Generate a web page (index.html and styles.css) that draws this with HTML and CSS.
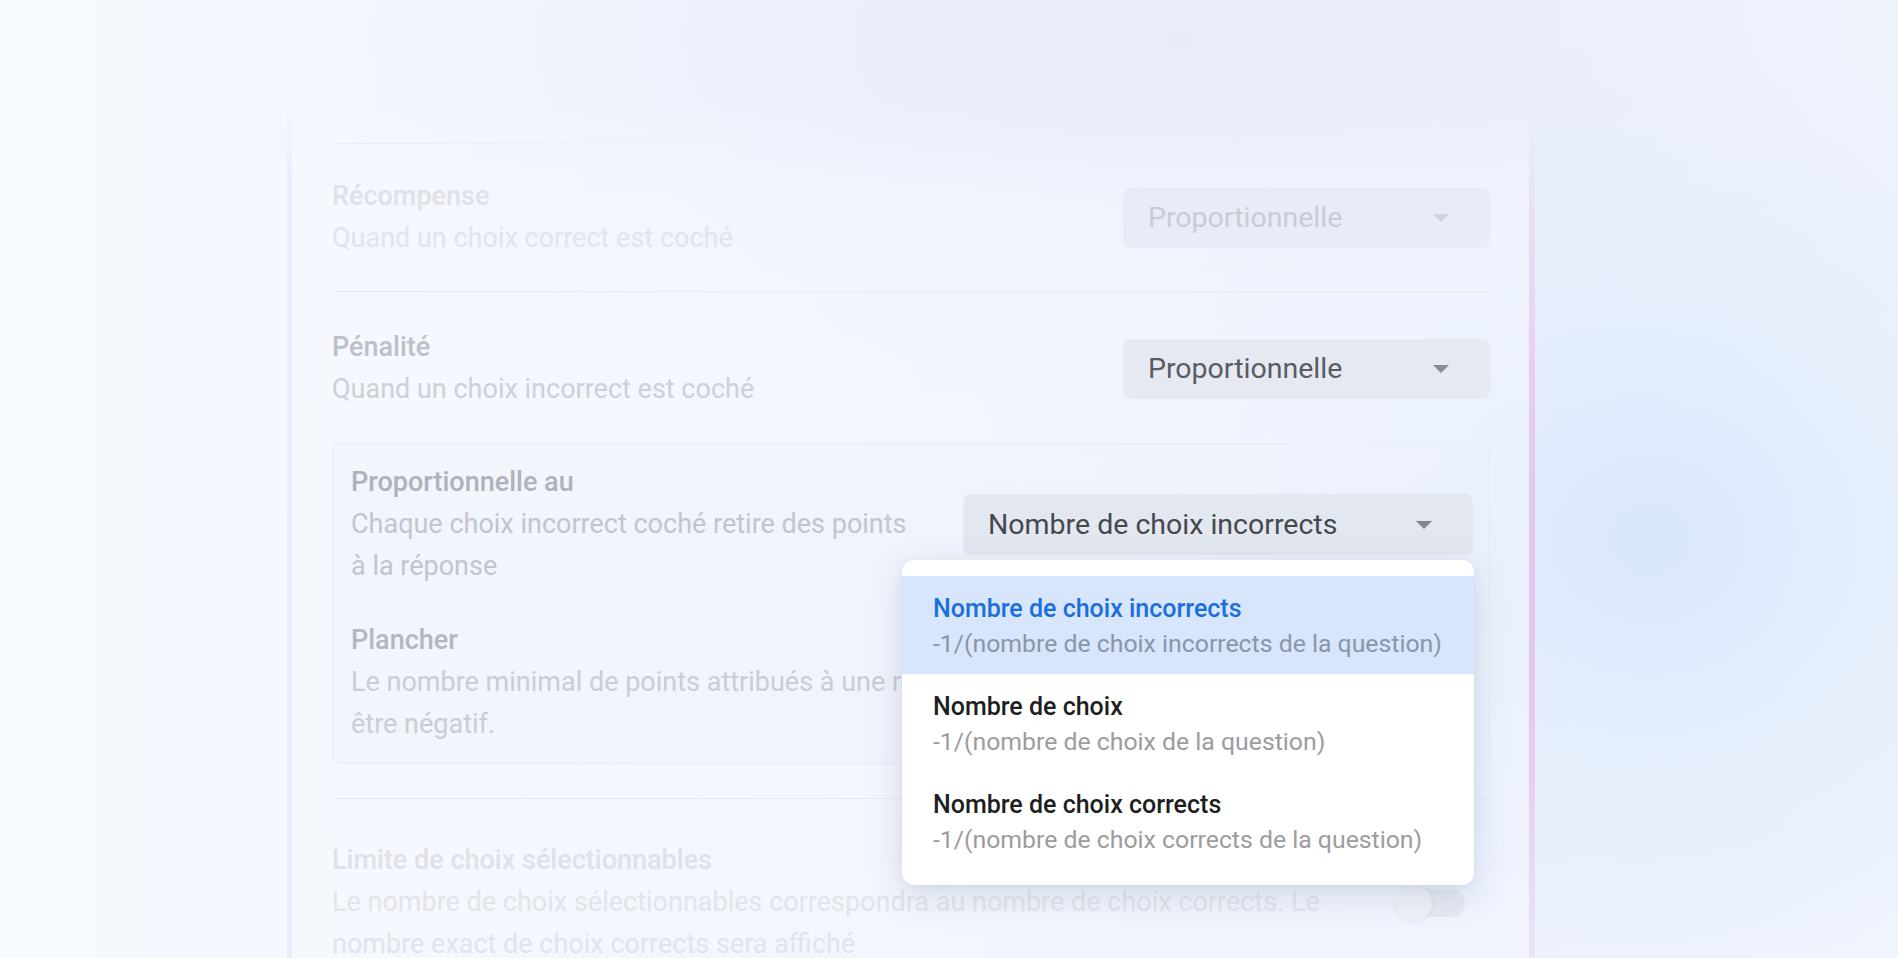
FILE: index.html
```html
<!DOCTYPE html>
<html lang="fr">
<head>
<meta charset="utf-8">
<title>Pénalité</title>
<link rel="stylesheet" href="styles.css">
</head>
<body>
<div class="stage">
  <div class="card">
    <div class="sec sec-top"></div>

    <div class="sec sec-a">
      <div class="row">
        <div class="text">
          <div class="title">Récompense</div>
          <div class="desc">Quand un choix correct est coché</div>
        </div>
        <div class="select select-a">
          <span>Proportionnelle</span>
          <svg class="arrow" width="16" height="8" viewBox="0 0 16 8"><path d="M0 0h16L8 8z"/></svg>
        </div>
      </div>
    </div>

    <div class="sec sec-b">
      <div class="row row-b">
        <div class="text">
          <div class="title">Pénalité</div>
          <div class="desc">Quand un choix incorrect est coché</div>
        </div>
        <div class="select select-b">
          <span>Proportionnelle</span>
          <svg class="arrow" width="16" height="8" viewBox="0 0 16 8"><path d="M0 0h16L8 8z"/></svg>
        </div>
      </div>

      <div class="box">
        <div class="row row-c">
          <div class="text">
            <div class="title">Proportionnelle au</div>
            <div class="desc">Chaque choix incorrect coché retire des points à la réponse</div>
          </div>
          <div class="select-wrap">
            <div class="select select-c">
              <span>Nombre de choix incorrects</span>
              <svg class="arrow" width="16" height="8" viewBox="0 0 16 8"><path d="M0 0h16L8 8z"/></svg>
            </div>
            <div class="menu">
              <div class="item active">
                <div class="item-title">Nombre de choix incorrects</div>
                <div class="item-sub">-1/(nombre de choix incorrects de la question)</div>
              </div>
              <div class="item">
                <div class="item-title">Nombre de choix</div>
                <div class="item-sub">-1/(nombre de choix de la question)</div>
              </div>
              <div class="item">
                <div class="item-title">Nombre de choix corrects</div>
                <div class="item-sub">-1/(nombre de choix corrects de la question)</div>
              </div>
            </div>
          </div>
        </div>

        <div class="row row-d">
          <div class="text text-floor">
            <div class="title">Plancher</div>
            <div class="desc">Le nombre minimal de points attribués à une réponse. Ne peut pas être négatif.</div>
          </div>
          <div class="num">0</div>
        </div>
      </div>
    </div>

    <div class="sec sec-c">
      <div class="row">
        <div class="text text-limit">
          <div class="title">Limite de choix sélectionnables</div>
          <div class="desc">Le nombre de choix sélectionnables correspondra au nombre de choix corrects. Le nombre exact de choix corrects sera affiché</div>
        </div>
        <div class="toggle"><span class="knob"></span></div>
      </div>
    </div>
  </div>
</div>
</body>
</html>
```

FILE: styles.css
```css
* { box-sizing: border-box; }

html, body {
  margin: 0;
  height: 958px;
  overflow: hidden;
}

body {
  font-family: Roboto, "Liberation Sans", Arial, sans-serif;
  background:
    radial-gradient(560px 500px at 1650px 540px, rgba(215, 230, 253, 0.95), rgba(222, 234, 253, 0.55) 45%, rgba(236, 241, 253, 0) 100%),
    radial-gradient(1000px 460px at 1180px 40px, rgba(231, 234, 250, 0.8), rgba(232, 235, 250, 0.3) 55%, rgba(232, 235, 250, 0) 100%),
    linear-gradient(90deg, #f6f9fe 0%, #f3f6fd 30%, #eef2fc 65%, #f1f5fd 100%);
}

.stage {
  padding: 60px 0 0 287px;
}

.card {
  width: 1248px;
  height: 960px;
  padding: 0 45px;
  background:
    linear-gradient(to bottom, rgba(233, 228, 248, 0) 0, rgba(233, 228, 248, 0) 40px, #e9e4f8 120px, #e8cdf0 320px, #e5c4ee 520px, #e7ccf0 700px, #e8e3f7 880px) right top / 6px 100% no-repeat,
    linear-gradient(to bottom, rgba(231, 237, 251, 0) 0, rgba(231, 237, 251, 0) 40px, #e8eefb 120px, #e6edfb 100%) left top / 5px 100% no-repeat,
    linear-gradient(to bottom, rgba(247, 249, 255, 0) 0, rgba(247, 249, 255, 0) 40px, rgba(247, 249, 255, 0.45) 140px, rgba(247, 249, 255, 0.35) 100%);
}

.sec {
  border-bottom: 1px solid #e6e9f1;
}

.sec-top {
  height: 84px;
  border-bottom-color: #ebeef8;
}

.sec-a {
  padding: 32px 0 32px;
}

.sec-b {
  padding: 35px 0 34px;
}

.sec-c {
  padding: 41px 0 0;
  border-bottom: 0;
}

.row {
  display: flex;
  align-items: center;
  justify-content: space-between;
  gap: 32px;
}

.text {
  flex: 1;
  min-width: 0;
}

.title {
  font-size: 27px;
  font-weight: 500;
  line-height: 41px;
}

.desc {
  font-size: 27px;
  font-weight: 400;
  line-height: 42px;
}

/* Récompense (most faded) */
.sec-a .title { color: #dfe1e7; }
.sec-a .desc { color: #e2e4ea; }

/* Pénalité */
.row-b .title { color: #bdc0c6; }
.row-b .desc { color: #cdd0d6; }

/* Box rows */
.row-c .title { color: #afb2b9; }
.row-c .desc { color: #c2c5cb; }
.row-c .text { max-width: 566px; }
.row-d .title { color: #b4b7bd; }
.row-d .desc { color: #cacdd3; }

/* Limite */
.sec-c .title { color: #dfe1e7; }
.sec-c .desc { color: #e2e4e9; }

.select {
  display: flex;
  align-items: center;
  justify-content: space-between;
  height: 60px;
  padding: 0 41px 0 25px;
  border-radius: 8px;
  font-size: 28.5px;
  flex: none;
}

.select-a {
  width: 367px;
  background: #e8ecf7;
  color: #c8ccd5;
}
.select-a .arrow { fill: #cfd3dc; }

.select-b {
  width: 367px;
  background: #e6e9f2;
  color: #585c63;
}
.select-b .arrow { fill: #888b92; }

.box {
  margin-top: 33px;
  padding: 18px 16px 18px 18px;
  border: 1px solid #e8ebf3;
  border-radius: 8px;
  background: rgba(238, 242, 251, 0.45);
}

.row-c {
  margin-bottom: 33px;
}

.select-wrap {
  position: relative;
  flex: none;
}

.select-c {
  width: 510px;
  height: 61px;
  background: #e3e7ef;
  color: #44484f;
}
.select-c .arrow { fill: #83868d; }

.text-floor .desc {
  max-width: 800px;
}

.num {
  width: 160px;
  height: 60px;
  border-radius: 8px;
  background: #e6e9f1;
  color: #b0b3ba;
  font-size: 27px;
  display: flex;
  align-items: center;
  padding-left: 20px;
  flex: none;
}

.menu {
  position: absolute;
  top: calc(100% + 5px);
  left: -61px;
  width: 572px;
  padding: 16px 0 15px;
  background: #ffffff;
  border-radius: 12px;
  box-shadow: 0 10px 36px rgba(90, 110, 150, 0.2), 0 2px 8px rgba(90, 110, 150, 0.08);
  z-index: 5;
}

.item {
  padding: 15px 20px 13px 31px;
  white-space: nowrap;
}

.item-title {
  font-size: 25px;
  font-weight: 500;
  line-height: 35px;
  color: #1e1f21;
}

.item-sub {
  font-size: 24.8px;
  line-height: 35px;
  color: #9c9c9e;
}

.item.active {
  background: #d7e6fc;
}
.item.active .item-title { color: #1b6fdc; }
.item.active .item-sub { color: #8896a9; }

.text-limit {
  max-width: 1000px;
}

.toggle {
  position: relative;
  flex: none;
  width: 66px;
  height: 28px;
  margin-right: 25px;
  border-radius: 14px;
  background: #e6e9f1;
}

.knob {
  position: absolute;
  left: -3px;
  top: -4px;
  width: 36px;
  height: 36px;
  border-radius: 50%;
  background: #eff2f8;
  box-shadow: 0 1px 4px rgba(120, 130, 160, 0.12);
}
```
